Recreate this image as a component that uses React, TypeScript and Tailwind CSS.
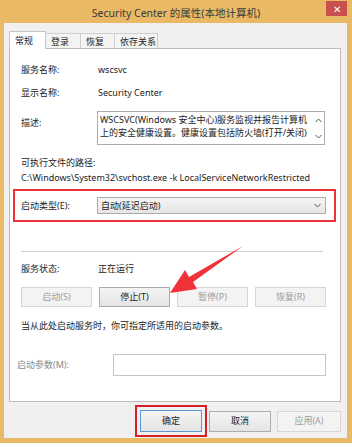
import React from "react";

type BtnProps = { label: string; w: string; disabled?: boolean; primary?: boolean };

function Btn({ label, w, disabled, primary }: BtnProps) {
  if (disabled) {
    return (
      <div className={`${w} h-full flex items-center justify-center border border-[#d6d6d6] bg-[#f3f3f3] text-[#9c9c9c]`}>
        {label}
      </div>
    );
  }
  return (
    <div
      className={`${w} h-full flex items-center justify-center border bg-linear-to-b from-[#f4f4f4] to-[#e4e4e4] text-[#1e1e1e] ${
        primary ? "border-[#5a9ad6]" : "border-[#acacac]"
      }`}
    >
      {label}
    </div>
  );
}

function Tab({ label, active, w }: { label: string; active?: boolean; w: string }) {
  if (active) {
    return (
      <div className={`${w} h-[18px] -mb-px z-10 relative flex items-start pt-[2px] pl-[5px] bg-white border border-b-0 border-[#c4c4c4] text-[#1e1e1e]`}>
        {label}
      </div>
    );
  }
  return (
    <div className={`${w} h-[15px] flex items-start pt-px pl-[5px] bg-[#f4f4f4] border border-l-0 border-b-0 border-[#cfcfcf] text-[#1e1e1e]`}>
      {label}
    </div>
  );
}

function Chevron({ up }: { up?: boolean }) {
  return (
    <svg width="7" height="5" viewBox="0 0 7 5">
      <path d={up ? "M0.5 4 L3.5 1 L6.5 4" : "M0.5 1 L3.5 4 L6.5 1"} fill="none" stroke="#555" strokeWidth="1" />
    </svg>
  );
}

export default function App() {
  return (
    <div className="relative w-[352px] h-[447px] bg-white font-['Noto_Sans','Noto_Sans_CJK_SC',sans-serif] text-[9px] leading-[14px] text-[#222]">
      <div className="h-[443px] bg-[#e9b965] flex flex-col">
        {/* title bar */}
        <div className="h-[23px] relative flex items-center justify-center text-[10.5px] text-[#3a3a3a]">
          <span className="mt-[2px]">Security Center 的属性(本地计算机)</span>
          <div className="absolute right-[5px] top-px w-[21px] h-[15px] bg-[#c9504d] flex items-center justify-center text-white text-[10px] leading-none">
            ✕
          </div>
        </div>

        {/* client area */}
        <div className="flex-1 ml-[4px] mr-[5px] mb-[5px] bg-[#f0f0f0] flex flex-col pl-[5px] pr-[6px] pt-[8px]">
          <div className="flex items-end h-[17px]">
            <Tab label="常规" active w="w-[37px]" />
            <Tab label="登录" w="w-[35px]" />
            <Tab label="恢复" w="w-[34px]" />
            <Tab label="依存关系" w="w-[43px]" />
          </div>

          <div className="h-[354px] bg-white border border-[#bdbdbd] pl-[11px] flex flex-col">
            <div className="mt-[14px] h-[14px] flex">
              <span className="w-[77px]">服务名称:</span>
              <span>wscsvc</span>
            </div>
            <div className="mt-[9px] h-[14px] flex">
              <span className="w-[77px]">显示名称:</span>
              <span>Security Center</span>
            </div>
            <div className="mt-[11px] h-[34px] flex">
              <span className="w-[76px] mt-[5px]">描述:</span>
              <div className="w-[228px] h-full border border-[#acacac] flex pl-[2px] pt-px">
                <div className="flex-1 leading-[13px] text-[9px]">
                  WSCSVC(Windows 安全中心)服务监视并报告计算机
                  <br />
                  上的安全健康设置。健康设置包括防火墙(打开/关闭)
                </div>
                <div className="w-[12px] flex flex-col items-center justify-between py-[5px]">
                  <Chevron up />
                  <Chevron />
                </div>
              </div>
            </div>
            <div className="mt-[11px] h-[14px]">可执行文件的路径:</div>
            <div className="mt-px h-[14px] whitespace-nowrap">C:\Windows\System32\svchost.exe -k LocalServiceNetworkRestricted</div>

            <div className="mt-[4px] -ml-[8px] w-[323px] h-[33px] border-2 border-[#ef3039] flex items-center pl-[6px]">
              <span className="w-[76px]">启动类型(E):</span>
              <div className="w-[229px] h-[17px] border border-[#acacac] bg-linear-to-b from-[#f5f5f5] to-[#e6e6e6] flex items-center justify-between pl-[3px] pr-[4px]">
                <span>自动(延迟启动)</span>
                <Chevron />
              </div>
            </div>

            <div className="mt-[29px] w-[302px] h-px bg-[#d0d0d0]" />

            <div className="mt-[10px] h-[14px] flex">
              <span className="w-[77px]">服务状态:</span>
              <span>正在运行</span>
            </div>

            <div className="mt-[11px] h-[20px] flex gap-[7px]">
              <Btn label="启动(S)" w="w-[71px]" disabled />
              <Btn label="停止(T)" w="w-[71px]" />
              <Btn label="暂停(P)" w="w-[71px]" disabled />
              <Btn label="恢复(R)" w="w-[71px]" disabled />
            </div>

            <div className="mt-[12px] h-[14px]">当从此处启动服务时，你可指定所适用的启动参数。</div>

            <div className="mt-[21px] h-[22px] flex items-center -ml-[4px]">
              <span className="w-[96px] text-[#8a8a8a]">启动参数(M):</span>
              <div className="w-[213px] h-full border border-[#c4c4c4] bg-white" />
            </div>
          </div>

          <div className="mt-[3px] h-[32px] flex justify-end items-center">
            <div className="h-full border-2 border-[#d51f26] p-[3px] flex">
              <Btn label="确定" w="w-[62px]" primary />
            </div>
            <div className="ml-[2px] h-[21px] flex">
              <Btn label="取消" w="w-[62px]" />
            </div>
            <div className="ml-[6px] h-[21px] flex">
              <Btn label="应用(A)" w="w-[64px]" disabled />
            </div>
          </div>
        </div>
      </div>

      {/* red annotation arrow */}
      <svg className="absolute left-0 top-0 pointer-events-none" width="352" height="447">
        <polygon points="170,293 185,270 189,277 243,246 193,282 197,289" fill="#f0323a" />
      </svg>
    </div>
  );
}
